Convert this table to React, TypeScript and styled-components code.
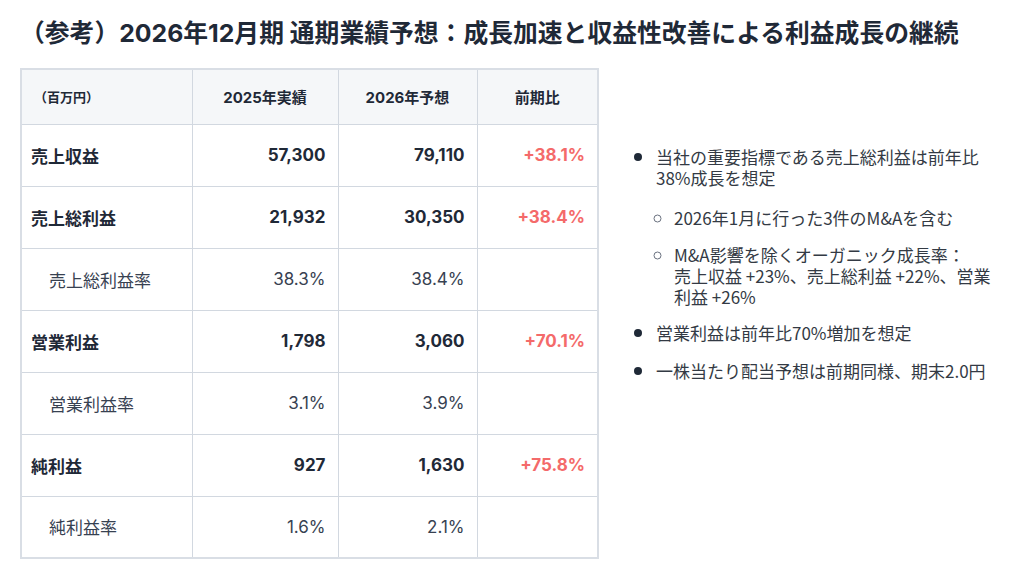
import React from "react";
import styled, { createGlobalStyle } from "styled-components";

const Global = createGlobalStyle`
  html, body { margin: 0; padding: 0; background: #ffffff; }
  body { width: 1024px; height: 574px; overflow: hidden; }
  * { box-sizing: border-box; }
`;

const Page = styled.div`
  width: 1024px;
  height: 574px;
  padding: 18px 20px 0 20px;
  font-family: Inter, "Noto Sans CJK JP", sans-serif;
  color: #1f2937;
`;

const Title = styled.h1`
  margin: 0;
  font-size: 24.8px;
  line-height: 30px;
  font-weight: 700;
  color: #1f2937;
  white-space: nowrap;
  letter-spacing: 0;
`;

const Body = styled.div`
  display: flex;
  align-items: flex-start;
  margin-top: 20px;
`;

const Table = styled.table`
  border-collapse: collapse;
  table-layout: fixed;
  width: 577px;
  border: 2px solid #d9dee5;
`;

const Th = styled.th<{ $align?: string; $small?: boolean }>`
  height: 55px;
  background: #f5f7f9;
  border: 1px solid #d2d8e0;
  font-size: ${(p) => (p.$small ? "13px" : "15px")};
  font-weight: 700;
  color: #1f2937;
  text-align: ${(p) => p.$align || "center"};
  padding: 0 12px;
`;

const Td = styled.td<{ $bold?: boolean; $indent?: boolean; $align?: string; $up?: boolean }>`
  height: 62px;
  border: 1px solid #d2d8e0;
  font-size: 17px;
  font-weight: ${(p) => (p.$bold ? 700 : 400)};
  color: ${(p) => (p.$up ? "#f46a6a" : p.$bold ? "#1f2937" : "#374151")};
  text-align: ${(p) => p.$align || "left"};
  padding: 0 12px 0 ${(p) => (p.$indent ? "27px" : "9px")};
  white-space: nowrap;
`;

const Side = styled.div`
  flex: 1;
  padding: 77px 0 0 0;
`;

const List = styled.ul`
  margin: 0;
  padding-left: 57px;
  font-family: "Noto Sans CJK JP", sans-serif;
  font-size: 17px;
  line-height: 21px;
  color: #333a44;
  list-style: disc;
  width: 402px;
`;

const Item = styled.li`
  margin-bottom: 16px;
  &::marker { color: #1f2937; font-size: 20px; }
`;

const SubList = styled.ul`
  margin: 19px 0 -2px 0;
  padding-left: 18px;
  list-style: circle;
`;

const SubItem = styled.li`
  margin-bottom: 16px;
  &:last-child { margin-bottom: 0; }
  &::marker { color: #6b7280; font-size: 17px; }
`;

type Row = { label: string; a: string; b: string; c?: string; sub?: boolean };

const rows: Row[] = [
  { label: "売上収益", a: "57,300", b: "79,110", c: "+38.1%" },
  { label: "売上総利益", a: "21,932", b: "30,350", c: "+38.4%" },
  { label: "売上総利益率", a: "38.3%", b: "38.4%", sub: true },
  { label: "営業利益", a: "1,798", b: "3,060", c: "+70.1%" },
  { label: "営業利益率", a: "3.1%", b: "3.9%", sub: true },
  { label: "純利益", a: "927", b: "1,630", c: "+75.8%" },
  { label: "純利益率", a: "1.6%", b: "2.1%", sub: true },
];

export default function App() {
  return (
    <>
      <Global />
      <Page>
        <Title>（参考）2026年12月期 通期業績予想：成長加速と収益性改善による利益成長の継続</Title>
        <Body>
          <Table>
            <colgroup>
              <col style={{ width: 171 }} />
              <col style={{ width: 146 }} />
              <col style={{ width: 139 }} />
              <col style={{ width: 121 }} />
            </colgroup>
            <thead>
              <tr>
                <Th $align="left" $small>（百万円）</Th>
                <Th>2025年実績</Th>
                <Th>2026年予想</Th>
                <Th>前期比</Th>
              </tr>
            </thead>
            <tbody>
              {rows.map((r) => (
                <tr key={r.label}>
                  <Td $bold={!r.sub} $indent={r.sub}>{r.label}</Td>
                  <Td $bold={!r.sub} $align="right">{r.a}</Td>
                  <Td $bold={!r.sub} $align="right">{r.b}</Td>
                  <Td $bold={!r.sub} $align="right" $up={!!r.c}>{r.c || ""}</Td>
                </tr>
              ))}
            </tbody>
          </Table>
          <Side>
            <List>
              <Item>
                当社の重要指標である売上総利益は前年比38%成長を想定
                <SubList>
                  <SubItem>2026年1月に行った3件のM&amp;Aを含む</SubItem>
                  <SubItem>
                    M&amp;A影響を除くオーガニック成長率：
                    <br />
                    売上収益 +23%、売上総利益 +22%、営業利益 +26%
                  </SubItem>
                </SubList>
              </Item>
              <Item>営業利益は前年比70%増加を想定</Item>
              <Item>一株当たり配当予想は前期同様、期末2.0円</Item>
            </List>
          </Side>
        </Body>
      </Page>
    </>
  );
}
